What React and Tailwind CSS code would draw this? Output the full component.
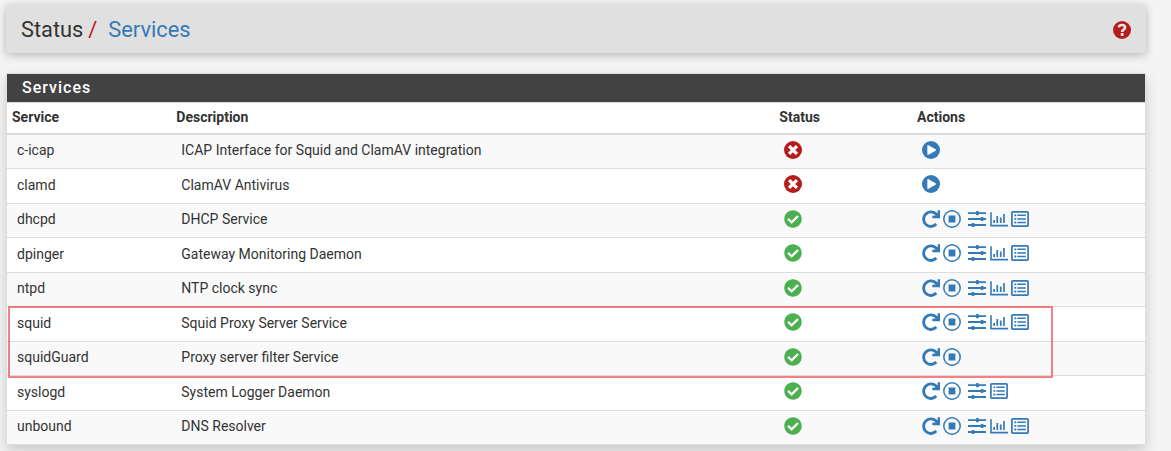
import { FaCheckCircle } from 'react-icons/fa';

function HelpIcon() {
  return (
    <svg className="size-[18px] text-[#b71c1c]" viewBox="0 0 18 18" fill="none">
      <circle cx="9" cy="9" r="9" fill="currentColor" />
      <path d="M5.5 6.3C6.1 4.8 7.3 4 8.9 4C10.8 4 12.1 5 12.1 6.6C12.1 8.6 9.2 8.6 9.2 10.6V11" stroke="#e8e4e4" strokeWidth="2.6" />
      <rect x="7.8" y="12.1" width="2.8" height="2.8" rx="0.4" fill="#e8e4e4" />
    </svg>
  );
}

function FailedIcon() {
  return (
    <svg className="size-[18px] text-[#b71c1c]" viewBox="0 0 18 18">
      <circle cx="9" cy="9" r="9" fill="currentColor" />
      <path d="M6.2 6.2L11.8 11.8M11.8 6.2L6.2 11.8" stroke="white" strokeWidth="3.2" strokeLinecap="square" />
    </svg>
  );
}

function PlayIcon() {
  return (
    <svg className="size-[18px]" viewBox="0 0 18 18">
      <circle cx="9" cy="9" r="9" fill="currentColor" />
      <path d="M6.1 4.8L13.2 9L6.1 13.2Z" fill="white" stroke="white" strokeWidth="1.5" strokeLinejoin="round" />
    </svg>
  );
}

function RestartIcon() {
  return (
    <svg className="size-[18px]" viewBox="0 0 18 18" fill="none">
      <path d="M14.3 14.1A7.3 7.3 0 1 1 13.9 3.8L15.4 5.3" stroke="currentColor" strokeWidth="2.9" />
      <path d="M15.6.3H18V8.2H10.3V5.8L13.3 5.6L15.7 3.2Z" fill="currentColor" />
    </svg>
  );
}

function StopIcon() {
  return (
    <svg className="ml-[3.5px] size-[18px]" viewBox="0 0 18 18" fill="none">
      <circle cx="9" cy="9" r="8.2" stroke="currentColor" strokeWidth="1.5" />
      <rect x="5.6" y="5.6" width="6.8" height="6.8" rx="0.3" fill="currentColor" />
    </svg>
  );
}

function SlidersIcon() {
  return (
    <svg className="size-[18px]" viewBox="0 0 18 18" fill="currentColor">
      <path d="M0 2.2H18V4.1H0ZM0 8.1H18V10H0ZM0 14.1H18V16H0Z" />
      <rect x="8" y="1" width="2.8" height="4.2" rx="0.8" />
      <rect x="12.7" y="6.9" width="2.8" height="4.2" rx="0.8" />
      <rect x="3.6" y="12.9" width="2.8" height="4.2" rx="0.8" />
    </svg>
  );
}

function ChartIcon() {
  return (
    <svg className="size-[18px]" viewBox="0 0 18 18" fill="currentColor">
      <path d="M0.2 2.2H1.8V14.8H18V16.4H0.2Z" />
      <path d="M3.3 10H5V13H3.3ZM6.4 6H8.1V13H6.4ZM9.9 7.5H11.6V13H9.9ZM13.1 4H14.8V13H13.1Z" />
    </svg>
  );
}

function ListIcon() {
  return (
    <svg className="size-[18px]" viewBox="0 0 18 18" fill="currentColor">
      <rect x="0.9" y="1.9" width="16.2" height="14.2" rx="0.8" fill="none" stroke="currentColor" strokeWidth="1.7" />
      <path d="M6.3 4.6H14.8V6.1H6.3ZM6.3 8.2H14.8V9.7H6.3ZM6.3 11.8H14.8V13.3H6.3Z" />
      <path d="M3.4 4.4H5.2V6.2H3.4ZM3.4 8H5.2V9.8H3.4ZM3.4 11.6H5.2V13.4H3.4Z" />
    </svg>
  );
}

const services = [
  ['c-icap', 'ICAP Interface for Squid and ClamAV integration', false, ''],
  ['clamd', 'ClamAV Antivirus', false, ''],
  ['dhcpd', 'DHCP Service', true, 'scl'],
  ['dpinger', 'Gateway Monitoring Daemon', true, 'scl'],
  ['ntpd', 'NTP clock sync', true, 'scl'],
  ['squid', 'Squid Proxy Server Service', true, 'scl'],
  ['squidGuard', 'Proxy server filter Service', true, ''],
  ['syslogd', 'System Logger Daemon', true, 'sl'],
  ['unbound', 'DNS Resolver', true, 'scl'],
];

const columns = 'grid grid-cols-[164.3px_603px_137.7px_1fr]';

function Actions({ running, links }) {
  if (!running) return <PlayIcon />;
  return (
    <>
      <RestartIcon />
      <StopIcon />
      {links && (
        <span className="ml-[7px] flex gap-[3.5px]">
          <SlidersIcon />
          {links.includes('c') && <ChartIcon />}
          <ListIcon />
        </span>
      )}
    </>
  );
}

export default function App() {
  return (
    <div className="h-[451px] overflow-hidden bg-[#f4f4f4] pt-[5px] pl-[6px] font-[Roboto,sans-serif] text-[14px] leading-5 text-[#333]">
      <header className="flex h-12 w-[1140px] items-center justify-between rounded-[4px] bg-[#e0e0e0] pt-[2px] pr-[15px] pl-[15px] shadow-[0_2px_10px_rgba(0,0,0,0.27)]">
        <h1 className="flex text-[21.8px] leading-6 text-[#333]">
          Status<span className="ml-[5px] text-[#c4161c]">/</span>
          <a className="ml-[11px] text-[#337ab7]">Services</a>
        </h1>
        <HelpIcon />
      </header>

      <section className="relative mt-5 h-[372px] w-[1140px] border border-[#ddd] bg-white shadow-[0_6px_12px_rgba(0,0,0,0.17)]">
        <h2 className="h-7 bg-[#424242] pl-[15px] text-[16px] leading-[27px] font-medium tracking-[1px] text-white">
          Services
        </h2>
        <div className={`${columns} h-[33px] border-t border-b-2 border-[#ddd] pl-[5px] leading-[29px] font-bold`}>
          <span>Service</span>
          <span>Description</span>
          <span>Status</span>
          <span>Actions</span>
        </div>
        <div>
          {services.map(([name, description, running, links]) => (
            <div
              key={name}
              className={`${columns} h-[34px] border-b border-[#ddd] pl-[10px] leading-[31px] odd:bg-[#f9f9f9] even:h-[35px] even:leading-[33px] last:h-[33px] last:border-b-0`}
            >
              <span>{name}</span>
              <span>{description}</span>
              <span className="flex h-[30px] items-center">
                {running ? <FaCheckCircle className="size-[18px] text-[#4caf50]" /> : <FailedIcon />}
              </span>
              <span className="flex h-[30px] items-center text-[#337ab7]">
                <Actions running={running} links={links} />
              </span>
            </div>
          ))}
        </div>
        <div className="absolute top-[232px] left-[1px] h-[72px] w-[1045px] border-2 border-[#f44b4b]/70" />
      </section>
    </div>
  );
}
